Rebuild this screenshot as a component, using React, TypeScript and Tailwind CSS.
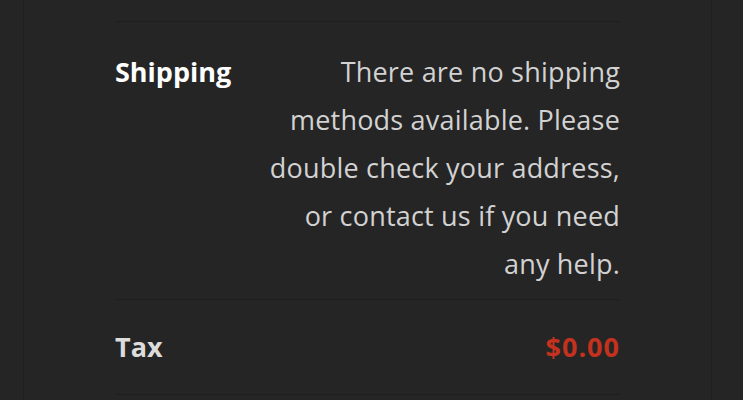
const NOTE_LINES = [
  'There are no shipping',
  'methods available. Please',
  'double check your address,',
  'or contact us if you need',
  'any help.',
];

export default function App() {
  return (
    <div
      className="min-h-[400px] bg-[#252525]"
      style={{ fontFamily: '"Open Sans", "Noto Sans", sans-serif' }}
    >
      <div className="ml-[23px] mr-[31px] min-h-[400px] border-x border-[#1e1f22] px-[91px]">
        <div className="h-[21px]" />
        {/* Shipping row */}
        <div className="flex justify-between border-t border-[#1e1f22] pt-[26px] pb-[11px]">
          <span className="text-[27px] leading-[48px] font-bold text-white">Shipping</span>
          <p className="text-right text-[27px] leading-[48px] tracking-[0.2px] text-[#d2d2d2]">
            {NOTE_LINES.map((l) => (
              <span key={l} className="block">
                {l}
              </span>
            ))}
          </p>
        </div>
        {/* Tax row */}
        <div className="flex items-center justify-between border-y border-[#1e1f22] py-[23px]">
          <span className="text-[27px] leading-[48px] font-bold text-[#dcdcdc]">Tax</span>
          <span className="text-[27px] leading-[48px] font-bold tracking-[1px] text-[#c4321f]">$0.00</span>
        </div>
      </div>
    </div>
  );
}
